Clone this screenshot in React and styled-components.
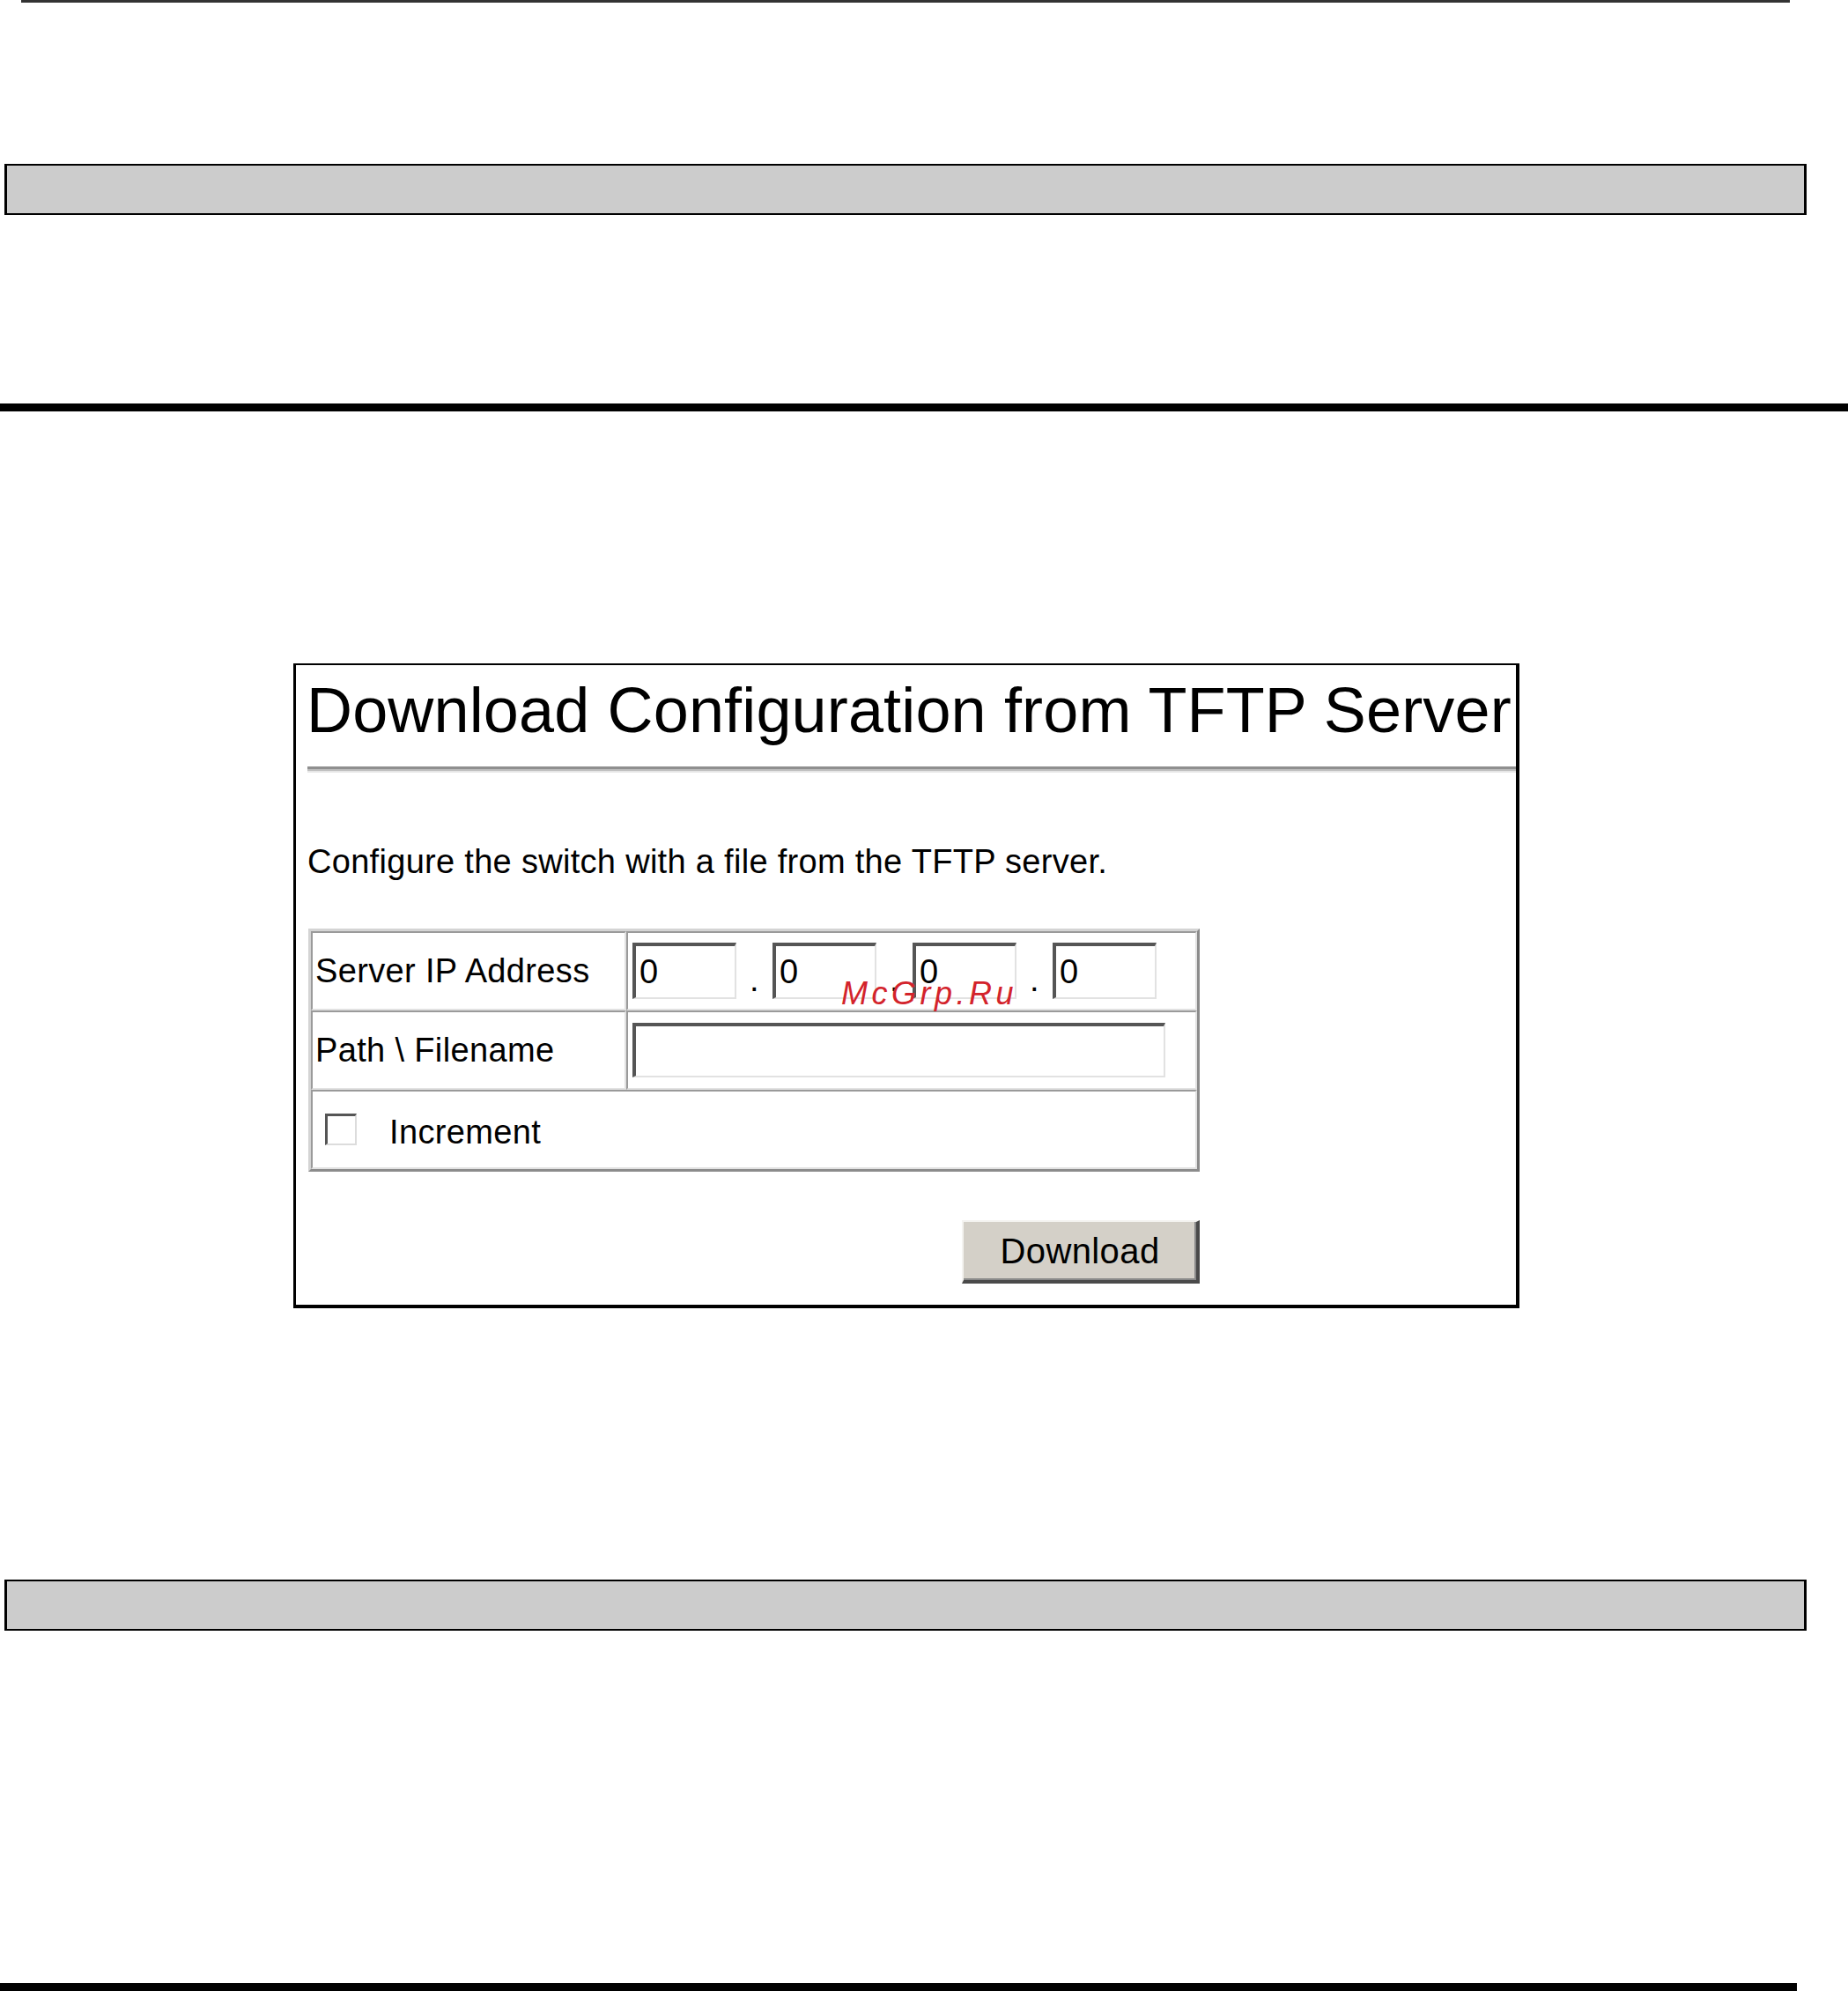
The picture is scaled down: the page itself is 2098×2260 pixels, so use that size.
import React from 'react';
import styled, { createGlobalStyle } from 'styled-components';

const GlobalStyle = createGlobalStyle`
    html, body {
        margin: 0;
        padding: 0;
        background: #fff;
    }
    body {
        font-family: "Liberation Sans", Arial, sans-serif;
        color: #000;
    }
`;

const Page = styled.div`
    width: 2098px;
    height: 2260px;
    overflow: hidden;
`;

const TopRule = styled.div`
    width: 2008px;
    height: 3px;
    margin-left: 24px;
    background: #333;
`;

const Banner = styled.div`
    box-sizing: border-box;
    width: 2046px;
    height: 58px;
    margin: ${props => props.$top}px 0 0 5px;
    background: #ccc;
    border: 2px solid #000;
    border-left-width: 3px;
    border-right-width: 3px;
`;

const ThickRule = styled.div`
    width: ${props => props.$width}px;
    height: 9px;
    margin-top: ${props => props.$top}px;
    background: #000;
`;

const Panel = styled.div`
    box-sizing: border-box;
    width: 1392px;
    height: 732px;
    margin: 286px 0 0 333px;
    padding-left: 13px;
    border: 3px solid #000;
    border-top-width: 2px;
    border-right-width: 4px;
    border-bottom-width: 4px;
    background: #fff;
    overflow: hidden;
`;

const Title = styled.h1`
    margin: 15px 0 0 -1px;
    font-size: 72px;
    line-height: 72px;
    font-weight: normal;
    letter-spacing: 0.15px;
    white-space: nowrap;
`;

const Divider = styled.div`
    height: 7px;
    margin-top: 28px;
    background: linear-gradient(
        to bottom,
        #8f8f8f 0,
        #8f8f8f 3px,
        #bdbdbd 3px,
        #bdbdbd 5px,
        #e6e6e6 5px
    );
`;

const Intro = styled.p`
    margin: 82px 0 0;
    font-size: 38px;
    line-height: 38px;
    letter-spacing: 0.3px;
    white-space: nowrap;
`;

const Form = styled.div`
    position: relative;
    width: 1012px;
    margin-top: 57px;
    margin-left: 1px;
`;

const Table = styled.table`
    box-sizing: border-box;
    width: 1012px;
    border-collapse: separate;
    border-spacing: 0;
    table-layout: fixed;
    border: 3px solid;
    border-color: #d4d4d4 #8c8c8c #8c8c8c #d4d4d4;
`;

const Cell = styled.td`
    box-sizing: border-box;
    height: 90px;
    width: ${props => (props.$width ? `${props.$width}px` : 'auto')};
    padding: 0 0 0 ${props => props.$pad || 3}px;
    border: 2px solid;
    border-color: #9a9a9a #e2e2e2 #e2e2e2 #9a9a9a;
    font-size: 38px;
    line-height: 38px;
    letter-spacing: 0.35px;
    vertical-align: middle;
    white-space: nowrap;
`;

const IpGroup = styled.div`
    display: flex;
    align-items: flex-end;
`;

const Field = styled.input`
    box-sizing: border-box;
    width: ${props => props.$width}px;
    height: ${props => props.$height}px;
    margin: 0;
    padding: 0 0 0 4px;
    border-style: solid;
    border-width: 4px 2px 2px 4px;
    border-color: #555 #e2e2e2 #e2e2e2 #555;
    background: #fff;
    font-family: "Liberation Sans", Arial, sans-serif;
    font-size: 38px;
    color: #000;
    outline: none;
`;

const Dot = styled.span`
    width: 41px;
    margin-bottom: 3px;
    text-align: center;
    font-size: 38px;
    line-height: 38px;
`;

const CheckRow = styled.div`
    display: flex;
    align-items: center;
`;

const Box = styled.span`
    box-sizing: border-box;
    width: 36px;
    height: 36px;
    border-style: solid;
    border-width: 3px 2px 2px 3px;
    border-color: #555 #dcdcdc #dcdcdc #555;
    background: #fff;
`;

const CheckLabel = styled.span`
    margin: 6px 0 0 37px;
`;

const ButtonRow = styled.div`
    display: flex;
    justify-content: flex-end;
    margin-top: 55px;
`;

const Button = styled.button`
    box-sizing: border-box;
    width: 270px;
    height: 72px;
    padding: 0;
    border-style: solid;
    border-width: 2px 4px 4px 2px;
    border-color: #f4f3f0 #4a4a4a #4a4a4a #f4f3f0;
    box-shadow: inset -2px -2px 0 #8a8a8a;
    background: #d4d0c8;
    font-family: "Liberation Sans", Arial, sans-serif;
    font-size: 40px;
    letter-spacing: 0.4px;
    color: #000;
`;

const Watermark = styled.span`
    position: absolute;
    left: 605px;
    top: 56px;
    font-size: 36px;
    line-height: 36px;
    font-style: italic;
    letter-spacing: 4.5px;
    color: #d3232b;
    pointer-events: none;
`;

const octets = ['0', '0', '0', '0'];

const App = () => (
    <Page>
        <GlobalStyle />
        <TopRule />
        <Banner $top={183} />
        <ThickRule $top={214} $width={2098} />
        <Panel>
            <Title>Download Configuration from TFTP Server</Title>
            <Divider />
            <Intro>Configure the switch with a file from the TFTP server.</Intro>
            <Form>
                <Table>
                    <tbody>
                        <tr>
                            <Cell $width={358}>Server IP Address</Cell>
                            <Cell $pad={5}>
                                <IpGroup>
                                    {octets.map((value, i) => (
                                        <React.Fragment key={i}>
                                            {i > 0 && <Dot>.</Dot>}
                                            <Field $width={118} $height={64} defaultValue={value} />
                                        </React.Fragment>
                                    ))}
                                </IpGroup>
                            </Cell>
                        </tr>
                        <tr>
                            <Cell $width={358}>Path \ Filename</Cell>
                            <Cell $pad={5}>
                                <Field $width={605} $height={62} defaultValue="" />
                            </Cell>
                        </tr>
                        <tr>
                            <Cell colSpan={2} $pad={14}>
                                <CheckRow>
                                    <Box />
                                    <CheckLabel>Increment</CheckLabel>
                                </CheckRow>
                            </Cell>
                        </tr>
                    </tbody>
                </Table>
                <Watermark>McGrp.Ru</Watermark>
                <ButtonRow>
                    <Button>Download</Button>
                </ButtonRow>
            </Form>
        </Panel>
        <Banner $top={308} />
        <ThickRule $top={400} $width={2040} />
    </Page>
);

export default App;
